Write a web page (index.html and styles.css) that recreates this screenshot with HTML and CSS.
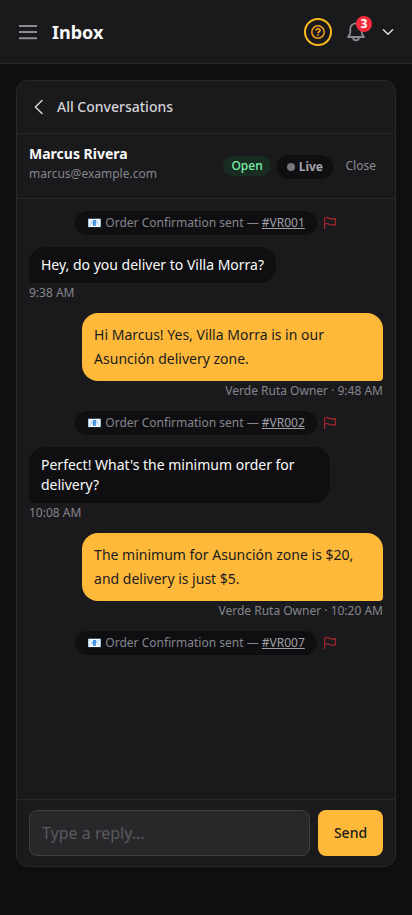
FILE: index.html
```html
<!DOCTYPE html>
<html lang="en">
<head>
<meta charset="utf-8">
<meta name="viewport" content="width=device-width, initial-scale=1">
<title>Inbox</title>
<link rel="stylesheet" href="styles.css">
</head>
<body>
<header class="topbar">
  <svg class="menu" width="20" height="20" viewBox="0 0 20 20" fill="none" stroke="currentColor" stroke-width="1.9"><path d="M1 4h18M1 10h18M1 16.300h18"/></svg>
  <h1>Inbox</h1>
  <div class="help"><svg width="16" height="16" viewBox="0 0 16 16" fill="none" stroke="currentColor" stroke-width="1.5"><circle cx="8" cy="8" r="6.2"/><path stroke-width="1.7" d="M6 6.500C6 4.200 10 4.200 10 6.400C10 7.900 8 7.600 8 9.200M8 10.200v1.600"/></svg></div>
  <div class="bell">
    <svg width="24" height="24" viewBox="0 0 24 24" fill="none" stroke="currentColor" stroke-width="1.8" stroke-linecap="round" stroke-linejoin="round"><path d="M4 17h16c-1.500-1.300-2.300-3-2.300-5V9a5.700 5.700 0 0 0-11.400 0v3c0 2-.8 3.700-2.300 5zM9 17.300a3 3 0 0 0 6 0"/></svg>
    <span class="count">3</span>
  </div>
  <svg class="chevron" width="16" height="16" viewBox="0 0 16 16" fill="none" stroke="currentColor" stroke-width="1.4" stroke-linecap="round" stroke-linejoin="round"><path d="M3.400 5.800 8 10.300l4.600-4.500"/></svg>
</header>
<main class="panel">
  <a class="back"><svg width="20" height="20" viewBox="0 0 20 20" fill="none" stroke="currentColor" stroke-width="1.5" stroke-linecap="round" stroke-linejoin="round"><path d="M13 3.500 6.400 10l6.600 6.500"/></svg>All Conversations</a>
  <section class="contact">
    <div class="person"><div class="name">Marcus Rivera</div><div class="email">marcus@example.com</div></div>
    <span class="status">Open</span>
    <span class="live"><i class="dot"></i>Live</span>
    <span class="close">Close</span>
  </section>
  <section class="thread">
    <div class="event"><span class="pill">📧 Order Confirmation sent — <u>#VR001</u></span><svg class="flag" width="14" height="14" viewBox="0 0 14 14" fill="none" stroke="currentColor" stroke-width="1.2" stroke-linecap="round" stroke-linejoin="round"><path d="M1.600 12.500V2c1.600-.5 3.300-.4 4.900.4 2 .9 4 .9 6.100.2-.5 2-.5 4 0 6-2.100.7-4.100.7-6.100-.2-1.600-.8-3.300-.9-4.900-.4"/></svg></div>
    <div class="msg in"><p class="bubble">Hey, do you deliver to Villa Morra?</p><div class="meta">9:38 AM</div></div>
    <div class="msg out"><p class="bubble">Hi Marcus! Yes, Villa Morra is in our Asunción delivery zone.</p><div class="meta">Verde Ruta Owner · 9:48 AM</div></div>
    <div class="event"><span class="pill">📧 Order Confirmation sent — <u>#VR002</u></span><svg class="flag" width="14" height="14" viewBox="0 0 14 14" fill="none" stroke="currentColor" stroke-width="1.2" stroke-linecap="round" stroke-linejoin="round"><path d="M1.600 12.500V2c1.600-.5 3.300-.4 4.900.4 2 .9 4 .9 6.100.2-.5 2-.5 4 0 6-2.100.7-4.100.7-6.100-.2-1.600-.8-3.300-.9-4.900-.4"/></svg></div>
    <div class="msg in"><p class="bubble">Perfect! What's the minimum order for delivery?</p><div class="meta">10:08 AM</div></div>
    <div class="msg out"><p class="bubble">The minimum for Asunción zone is $20, and delivery is just $5.</p><div class="meta">Verde Ruta Owner · 10:20 AM</div></div>
    <div class="event"><span class="pill">📧 Order Confirmation sent — <u>#VR007</u></span><svg class="flag" width="14" height="14" viewBox="0 0 14 14" fill="none" stroke="currentColor" stroke-width="1.2" stroke-linecap="round" stroke-linejoin="round"><path d="M1.600 12.500V2c1.600-.5 3.300-.4 4.900.4 2 .9 4 .9 6.100.2-.5 2-.5 4 0 6-2.100.7-4.100.7-6.100-.2-1.600-.8-3.300-.9-4.900-.4"/></svg></div>
  </section>
  <footer class="composer">
    <div class="field">Type a reply...</div>
    <button class="send">Send</button>
  </footer>
</main>
</body>
</html>
```

FILE: styles.css
```css
* { box-sizing: border-box; }
body {
  margin: 0;
  height: 915px;
  overflow: hidden;
  background: #0f0f11;
  color: #fafafa;
  font: 14px/20px "Noto Sans", sans-serif;
}
svg { display: block; flex: none; }
h1, p { margin: 0; }
.topbar {
  height: 64px;
  padding: 0 16px 0 18px;
  display: flex;
  align-items: center;
  background: #1a1a1c;
  border-bottom: 1px solid #29292c;
}
.menu { color: #8b8b92; }
h1 { flex: 1; margin-left: 14px; font-size: 18px; line-height: 28px; font-weight: 700; }
.help {
  width: 28px;
  height: 28px;
  display: grid;
  place-items: center;
  border: 2px solid #f8b91b;
  border-radius: 50%;
  color: #f59e1b;
}
.bell { position: relative; margin-left: 12px; color: #898991; }
.count {
  position: absolute;
  top: -4px;
  right: -4px;
  width: 16px;
  height: 16px;
  border-radius: 50%;
  background: #f42c3b;
  color: #fff;
  font-size: 12px;
  line-height: 16px;
  font-weight: 700;
  text-align: center;
}
.chevron { margin-left: 12px; color: #e4e4e7; }
.panel {
  height: 787px;
  margin: 16px 16px 0;
  display: flex;
  flex-direction: column;
  background: #1a1a1c;
  border: 1px solid #29292c;
  border-radius: 12px;
  overflow: hidden;
}
.back {
  height: 53px;
  padding: 0 12px;
  display: flex;
  align-items: center;
  gap: 8px;
  border-bottom: 1px solid #29292c;
  color: #d4d4d8;
  font-weight: 500;
}
.contact {
  height: 65px;
  padding: 0 12px;
  display: flex;
  align-items: center;
  border-bottom: 1px solid #29292c;
  font-size: 12px;
  line-height: 16px;
}
.person { flex: 1; margin-bottom: 4px; }
.name { font-size: 14px; line-height: 20px; font-weight: 700; }
.email { line-height: 20px; color: #85858d; }
.status { padding: 2px 8px; border-radius: 10px; background: #192c22; color: #7bf1a8; font-weight: 500; }
.live {
  height: 24px;
  margin: 2px 0 0 6px;
  padding: 0 10px;
  display: flex;
  align-items: center;
  gap: 4px;
  border-radius: 12px;
  background: #0f0f11;
  color: #a5a5ad;
  font-weight: 700;
}
.dot { width: 8px; height: 8px; border-radius: 50%; background: #77777e; }
.close { margin: 0 7px 0 12.5px; color: #8b8b93; }
.thread {
  flex: 1;
  padding: 12px;
  display: flex;
  flex-direction: column;
  gap: 12px;
}
.event { display: flex; justify-content: center; align-items: center; gap: 6px; }
.pill {
  height: 24px;
  padding: 4px 12px;
  border-radius: 12px;
  background: #0f0f11;
  color: #85858d;
  font-size: 12px;
  line-height: 16px;
  white-space: nowrap;
}
.pill u { color: #a0a0a8; }
.flag { color: #a3272f; }
.msg { display: flex; flex-direction: column; align-items: flex-start; }
.bubble { max-width: 85%; padding: 8px 12px; }
.in .bubble { background: #0f0f11; border-radius: 16px 16px 16px 4px; }
.out { align-items: flex-end; }
.out .bubble {
  padding: 10px 12px;
  background: #ffb93a;
  color: #1b1b1d;
  line-height: 24px;
  border-radius: 16px 16px 4px 16px;
}
.meta { margin-top: 2px; color: #85858d; font-size: 12px; line-height: 16px; }
.composer {
  height: 67px;
  padding: 10px 12px;
  display: flex;
  gap: 8px;
  border-top: 1px solid #29292c;
}
.field {
  flex: 1;
  height: 46px;
  padding: 10px 12px;
  border: 1px solid #3f3f43;
  border-radius: 8px;
  background: #28282b;
  color: #5a5a61;
  font-size: 16px;
  line-height: 24px;
}
.send {
  width: 65px;
  height: 46px;
  padding: 0;
  border: 0;
  border-radius: 8px;
  background: #ffb93a;
  color: #1b1b1d;
  font: 500 14px/20px "Noto Sans", sans-serif;
}
```
